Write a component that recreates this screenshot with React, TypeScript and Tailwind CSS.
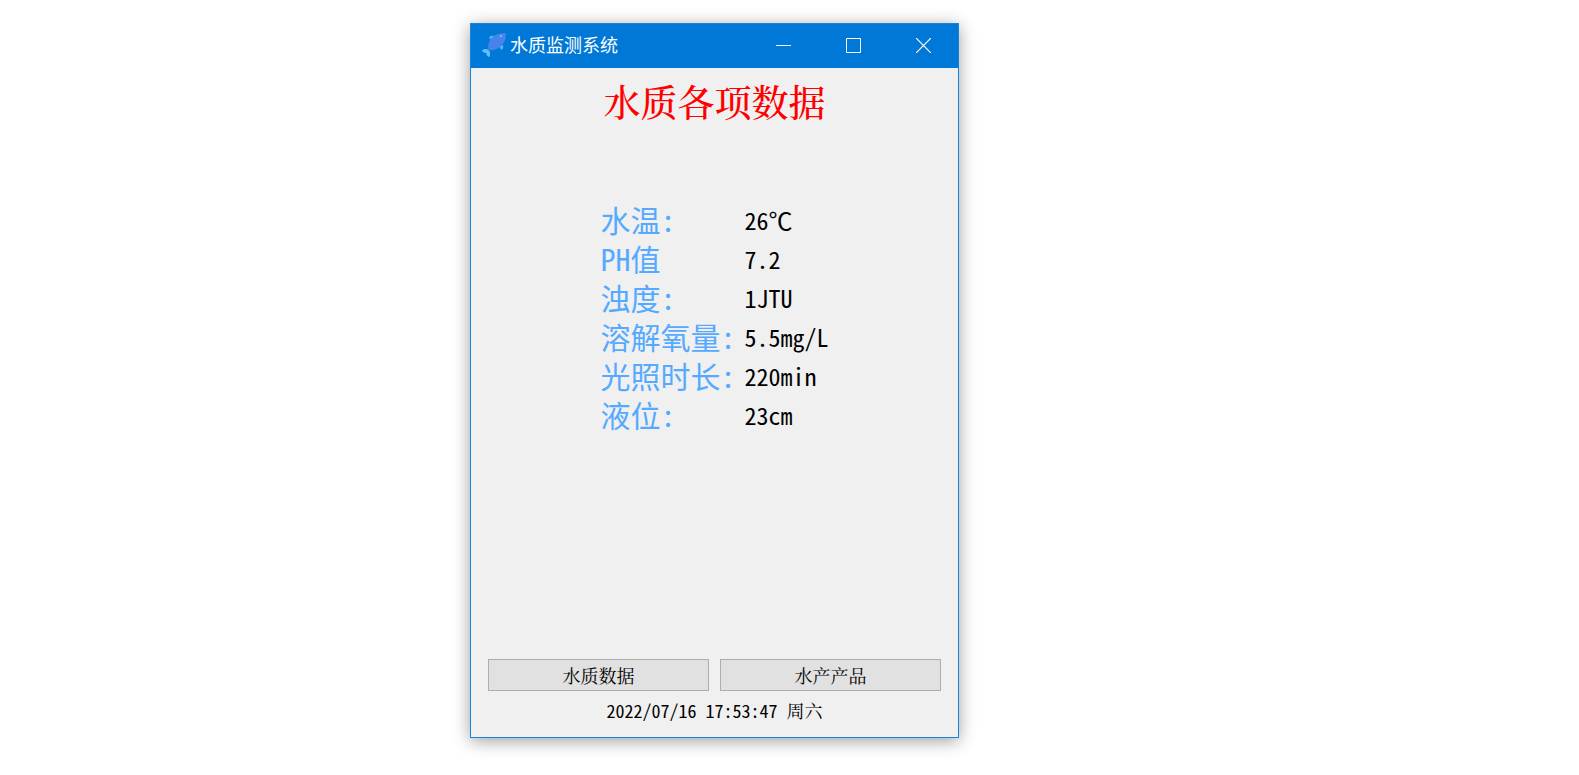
const readings = [
  { label: "水温:", value: "26℃" },
  { label: "PH值", value: "7.2" },
  { label: "浊度:", value: "1JTU" },
  { label: "溶解氧量:", value: "5.5mg/L" },
  { label: "光照时长:", value: "220min" },
  { label: "液位:", value: "23cm" },
];

function FishIcon() {
  return (
    <svg viewBox="0 0 24 24" className="size-6" aria-hidden="true">
      <path d="M7 5 Q8 2 12 3 L10 7 Z M20.5 12 Q22.5 14 19.5 17 L17.5 14 Z" fill="#5cb8f5" />
      <path d="M0 17.5 Q3 15 6.5 17 Q9 19 7.5 24 Q4 23 4.5 20 Q1 20 0 17.5 Z" fill="#62c0fa" />
      <path d="M6.5 17 Q5 9 10.5 4 Q16 0 23.5 0 Q25 6 20 12 Q15 18 6.5 17 Z" fill="#4783eb" />
      <circle cx="19" cy="3" r="1.3" fill="#62b8f8" />
    </svg>
  );
}

export default function App() {
  return (
    <main className="flex justify-center bg-white pt-[23px] pr-[150px] pb-9 font-['Liberation_Sans','Noto_Sans_CJK_SC',sans-serif]">
      <section className="flex min-h-[715px] w-full max-w-[489px] flex-col border border-[#1883d7] bg-[#f0f0f0] shadow-[0_3px_16px_rgba(0,0,0,0.38)]">
        <header className="flex h-11 items-center bg-[#0078d7] pb-0.5 pl-[11px] text-white">
          <FishIcon />
          <span className="ml-1 pt-0.5 text-lg">水质监测系统</span>
          <div className="ml-auto flex h-full">
            <button type="button" aria-label="最小化" className="flex w-[70px] items-center justify-center">
              <svg viewBox="0 0 15 15" className="size-[15px]" stroke="currentColor" fill="none">
                <path d="M0 7.5H15" />
              </svg>
            </button>
            <button type="button" aria-label="最大化" className="flex w-[70px] items-center justify-center">
              <svg viewBox="0 0 15 15" className="size-[15px]" stroke="currentColor" fill="none">
                <path d="M.5 .5H14.5V14.5H.5Z" />
              </svg>
            </button>
            <button type="button" aria-label="关闭" className="flex w-[70px] items-center justify-center">
              <svg viewBox="0 0 15 15" className="size-[15px]" stroke="currentColor" fill="none">
                <path d="M0 0L15 15M15 0L0 15" strokeWidth="1.2" />
              </svg>
            </button>
          </div>
        </header>

        <h1 className="mt-2.5 text-center font-['Noto_Serif_CJK_SC','Noto_Sans_CJK_SC',serif] text-[37px] leading-[46px] font-medium text-[#ff0000]">
          水质各项数据
        </h1>

        <dl className="mx-auto mt-[76px] grid grid-cols-[144px_auto] font-['Noto_Sans_Mono_CJK_SC','Liberation_Mono','Noto_Sans_CJK_SC',monospace]">
          {readings.map(({ label, value }) => (
            <div key={label} className="col-span-2 grid grid-cols-subgrid items-center">
              <dt className="text-[30px] leading-[39px] whitespace-nowrap text-[#55aaff]">{label}</dt>
              <dd className="text-2xl leading-[39px] text-black">{value}</dd>
            </div>
          ))}
        </dl>

        <footer className="mt-auto px-[17px] pb-3 font-['Noto_Serif_CJK_SC','Noto_Sans_CJK_SC',serif] text-lg text-black">
          <div className="grid grid-cols-2 gap-[11px]">
            <button type="button" className="h-8 border border-[#adadad] bg-[#e1e1e1] leading-[28px]">水质数据</button>
            <button type="button" className="h-8 border border-[#adadad] bg-[#e1e1e1] leading-[28px]">水产产品</button>
          </div>
          <p className="mt-1 text-center leading-[30px]">
            <time dateTime="2022-07-16T17:53:47" className="font-['Noto_Sans_Mono_CJK_SC','Liberation_Mono',monospace] whitespace-pre">{"2022/07/16 17:53:47 "}</time>
            周六
          </p>
        </footer>
      </section>
    </main>
  );
}
